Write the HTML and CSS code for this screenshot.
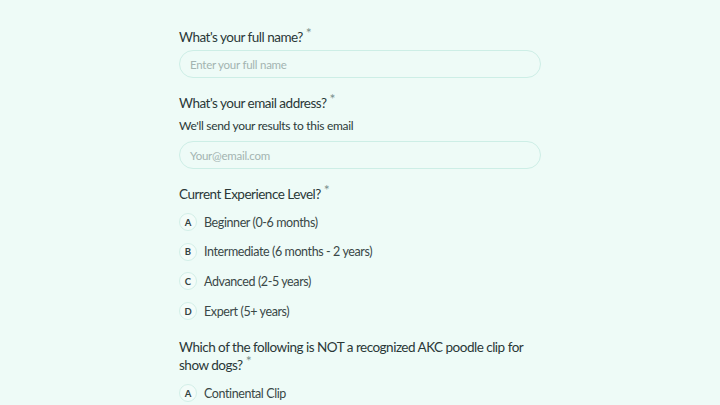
FILE: index.html
```html
<!DOCTYPE html>
<html lang="en">
<head>
<meta charset="utf-8">
<link rel="stylesheet" href="styles.css">
</head>
<body>
<main class="form">
  <section class="field">
    <label class="label">What's your full name?<span class="req">*</span></label>
    <div class="input"><span class="ph">Enter your full name</span></div>
  </section>
  <section class="field">
    <label class="label">What's your email address?<span class="req">*</span></label>
    <p class="hint">We'll send your results to this email</p>
    <div class="input input-b"><span class="ph">Your@email.com</span></div>
  </section>
  <section class="field">
    <label class="label">Current Experience Level?<span class="req">*</span></label>
    <ul class="options">
      <li class="opt"><span class="key">A</span><span class="txt">Beginner (0-6 months)</span></li>
      <li class="opt"><span class="key">B</span><span class="txt">Intermediate (6 months - 2 years)</span></li>
      <li class="opt"><span class="key">C</span><span class="txt">Advanced (2-5 years)</span></li>
      <li class="opt"><span class="key">D</span><span class="txt">Expert (5+ years)</span></li>
    </ul>
  </section>
  <section class="field">
    <label class="label">Which of the following is NOT a recognized AKC poodle clip for show dogs?<span class="req">*</span></label>
    <ul class="options">
      <li class="opt"><span class="key">A</span><span class="txt">Continental Clip</span></li>
    </ul>
  </section>
</main>
</body>
</html>
```
FILE: styles.css
```css
html, body {
  margin: 0;
  padding: 0;
  background: #eefbf7;
  height: 100%;
  overflow: hidden;
}
body {
  font-family: "Lato", "Inter", sans-serif;
  color: #2c3a39;
}
.form {
  width: 362px;
  margin: 0 auto;
  padding-top: 28px;
  display: flex;
  flex-direction: column;
  gap: 16px;
}
.field {
  display: flex;
  flex-direction: column;
}
.label {
  display: block;
  font-size: 13.5px;
  line-height: 18px;
  font-weight: 400;
  letter-spacing: -0.5px;
  color: #2a3837;
}
.req {
  display: inline-block;
  color: #7a918e;
  font-size: 14px;
  line-height: 10px;
  height: 10px;
  overflow: visible;
  vertical-align: 4px;
  margin-left: 3px;
}
.hint {
  margin: 6px 0 0;
  font-size: 12px;
  line-height: 16px;
  letter-spacing: -0.3px;
  color: #2c3a39;
}
.input {
  margin-top: 4px;
  height: 28px;
  box-sizing: border-box;
  border: 1px solid #cdeee6;
  border-radius: 14px;
  display: flex;
  align-items: center;
  padding-left: 10px;
  background: #eefbf7;
}
.input-b {
  margin-top: 7px;
}
.ph {
  font-size: 11.5px;
  letter-spacing: -0.25px;
  color: #a3b4b1;
}
.options {
  list-style: none;
  margin: 8px 0 0;
  padding: 0;
  display: flex;
  flex-direction: column;
  gap: 7.7px;
}
.opt {
  display: flex;
  align-items: center;
  height: 22px;
  gap: 7px;
}
.key {
  width: 18px;
  height: 18px;
  box-sizing: border-box;
  border: 1px solid #d3efe8;
  border-radius: 50%;
  display: flex;
  align-items: center;
  justify-content: center;
  font-size: 9.5px;
  font-weight: 700;
  color: #34423f;
  background: #f3fcf9;
}
.txt {
  font-size: 12.5px;
  letter-spacing: -0.4px;
  color: #3a4847;
}
```
